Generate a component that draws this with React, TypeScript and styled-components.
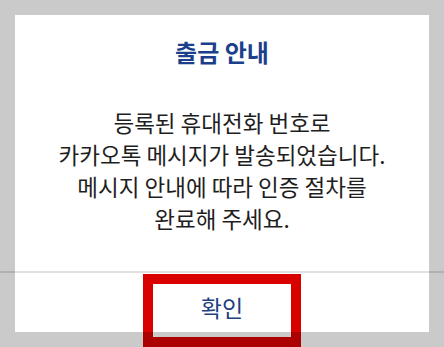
import React from "react";
import styled, { createGlobalStyle } from "styled-components";

const GlobalStyle = createGlobalStyle`
  html, body {
    margin: 0;
    padding: 0;
    width: 444px;
    height: 347px;
    overflow: hidden;
    background: #ffffff;
  }
  body {
    font-family: "Noto Sans CJK KR", "Noto Sans", sans-serif;
  }
`;

const Screen = styled.div`
  width: 444px;
  height: 347px;
  padding: 15px 15px 0;
  box-sizing: border-box;
`;

const Dialog = styled.div`
  position: relative;
  width: 414px;
  height: 317px;
  background: #ffffff;
  display: flex;
  flex-direction: column;

  /* dim everything outside of the dialog */
  &::after {
    content: "";
    position: absolute;
    inset: 0;
    box-shadow: 0 0 0 1000px rgba(0, 0, 0, 0.208);
    pointer-events: none;
    z-index: 2;
  }
`;

const Body = styled.div`
  height: 256px;
  display: flex;
  flex-direction: column;
  align-items: center;
  padding-top: 21px;
  box-sizing: border-box;
`;

const Title = styled.h2`
  margin: 0;
  font-size: 24px;
  line-height: 32px;
  font-weight: 700;
  color: #1b3f8b;
`;

const Message = styled.p`
  margin: 38px 0 0;
  font-size: 22.5px;
  line-height: 32px;
  font-weight: 400;
  color: #1e1e1e;
  text-align: center;
`;

const Divider = styled.div`
  height: 2px;
  margin: 0 -15px;
  background: rgba(0, 0, 0, 0.12);
`;

const Footer = styled.div`
  flex: 1;
  display: flex;
  justify-content: center;
  align-items: flex-start;
  padding-top: 19px;
  box-sizing: border-box;
`;

const ConfirmButton = styled.button`
  border: none;
  background: transparent;
  padding: 0;
  font-family: inherit;
  font-size: 23px;
  line-height: 30px;
  font-weight: 400;
  color: #1e3f80;
`;

const Highlight = styled.div`
  position: absolute;
  left: 128px;
  top: 259px;
  width: 158px;
  height: 73px;
  box-sizing: border-box;
  border: 10px solid #d90000;
  z-index: 1;
  pointer-events: none;
`;

export default function App() {
  return (
    <>
      <GlobalStyle />
      <Screen>
        <Dialog>
          <Body>
            <Title>출금 안내</Title>
            <Message>
              등록된 휴대전화 번호로
              <br />
              카카오톡 메시지가 발송되었습니다.
              <br />
              메시지 안내에 따라 인증 절차를
              <br />
              완료해 주세요.
            </Message>
          </Body>
          <Divider />
          <Footer>
            <ConfirmButton>확인</ConfirmButton>
          </Footer>
          <Highlight />
        </Dialog>
      </Screen>
    </>
  );
}
